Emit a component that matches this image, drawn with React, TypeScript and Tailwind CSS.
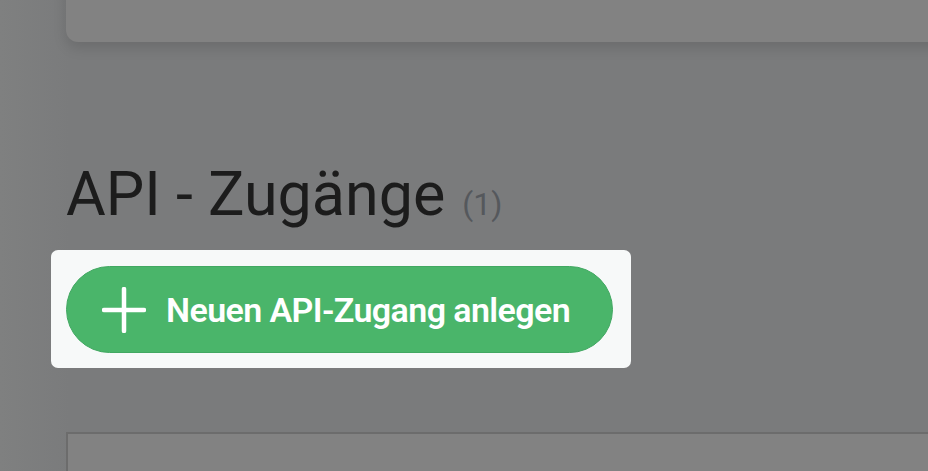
import React from "react";

export default function App() {
  return (
    <div
      className="relative w-[928px] h-[471px] overflow-hidden bg-[linear-gradient(to_right,#7f8080_0px,#7a7b7c_70px)]"
      style={{ fontFamily: "Roboto, 'Noto Sans', sans-serif" }}
    >
      <div className="pl-[66px]">
        {/* card (top, cut off) */}
        <div className="mt-[-100px] h-[142px] w-[900px] rounded-[12px] bg-[#828282] shadow-[0_6px_14px_rgba(0,0,0,0.12)]" />

        {/* heading */}
        <div className="mt-[117px] flex items-baseline leading-[70px]">
          <h1 className="text-[61px] font-normal text-[#1c1c1c]">API - Zugänge</h1>
          <span className="ml-[17px] text-[32px] text-[#55585c]">(1)</span>
        </div>

        {/* spotlight box */}
        <div className="ml-[-15px] mt-[11px] w-[580px] h-[118px] rounded-[7px] bg-[#f7f9f9] pl-[15px] pt-[16px]">
          <button className="flex h-[87px] w-[547px] items-center rounded-full border border-[#42a862] bg-[#4ab56a] pl-[35px] text-white">
            <svg width="44" height="46" viewBox="0 0 44 46" className="shrink-0">
              <path d="M22 2 V44 M2 23 H42" stroke="white" strokeWidth="4.5" strokeLinecap="round" fill="none" />
            </svg>
            <span className="ml-[20px] text-[34px] font-semibold leading-none tracking-[-0.6px]">Neuen API-Zugang anlegen</span>
          </button>
        </div>

        {/* table */}
        <div className="mt-[64px] h-[80px] w-[900px] border-l-2 border-t-2 border-[#6c6c6c] bg-[#828282]">
          <div className="flex pl-[44px] pt-[28px] text-[26px] font-medium text-[#1a1a1a] leading-[40px]">
            <span className="w-[330px]">Schlüssel</span>
            <span>Erstellt am</span>
          </div>
        </div>
      </div>
    </div>
  );
}
